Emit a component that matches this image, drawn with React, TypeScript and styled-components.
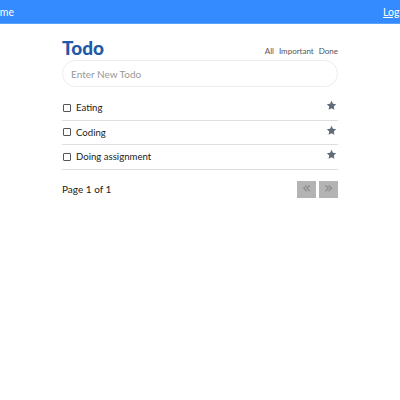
import React from "react";
import styled, { createGlobalStyle } from "styled-components";

const Global = createGlobalStyle`
  html, body { margin: 0; padding: 0; background: #fff; }
  body { font-family: Lato, "Open Sans", sans-serif; color: #222; }
  * { box-sizing: border-box; }
`;

const NavBar = styled.nav`
  height: 24px;
  background: #338bff;
  border-bottom: 1px solid #5aa2ff;
  display: flex;
  align-items: center;
  justify-content: space-between;
  overflow: hidden;
`;

const NavLink = styled.a<{ $edge: "left" | "right"; $underline?: boolean }>`
  color: #fff;
  font-size: 10.5px;
  text-decoration: ${(p) => (p.$underline ? "underline" : "none")};
  margin-left: ${(p) => (p.$edge === "left" ? "-14px" : "0")};
  margin-right: ${(p) => (p.$edge === "right" ? "-15px" : "0")};
  white-space: nowrap;
`;

const Main = styled.main`
  width: 276px;
  margin: 0 auto;
  padding-top: 12px;
`;

const Header = styled.div`
  display: flex;
  align-items: flex-end;
  justify-content: space-between;
  height: 24px;
`;

const Title = styled.h1`
  margin: 0;
  font-size: 19px;
  font-weight: 900;
  color: #1e5aa8;
  line-height: 24px;
`;

const Filters = styled.div`
  display: flex;
  gap: 5px;
  padding-bottom: 4px;
`;

const Filter = styled.span`
  font-size: 8px;
  color: #555;
`;

const Input = styled.input`
  width: 100%;
  height: 27px;
  border: 1px solid #ececec;
  border-radius: 14px;
  padding: 0 8px;
  font-family: inherit;
  font-size: 10px;
  outline: none;
  &::placeholder { color: #999; }
`;

const List = styled.ul`
  list-style: none;
  margin: 9px 0 0;
  padding: 0;
`;

const Row = styled.li`
  height: 24.5px;
  border-bottom: 1px solid #dfdfdf;
  display: flex;
  align-items: center;
  justify-content: space-between;
  padding: 0 1px;
`;

const Left = styled.label`
  display: flex;
  align-items: center;
  gap: 5px;
  font-size: 9.6px;
  color: #222;
`;

const Box = styled.span`
  width: 8px;
  height: 8px;
  border: 1px solid #555;
  border-radius: 1px;
  display: inline-block;
`;

const StarIcon = styled.svg`
  width: 11px;
  height: 11px;
  margin-top: -4px;
`;

const Pager = styled.div`
  display: flex;
  align-items: center;
  justify-content: space-between;
  margin-top: 11px;
`;

const PageText = styled.span`
  font-size: 10px;
  color: #222;
`;

const Buttons = styled.div`
  display: flex;
  gap: 3px;
`;

const PageBtn = styled.button`
  width: 19px;
  height: 17px;
  border: none;
  background: #b3b3b3;
  color: #888;
  font-size: 15px;
  line-height: 1;
  padding: 0 0 2px;
  display: flex;
  align-items: center;
  justify-content: center;
  font-family: "DejaVu Sans", sans-serif;
`;

const Star = () => (
  <StarIcon viewBox="0 0 24 24">
    <path
      fill="#5f6b7a"
      d="M12 1.8l3.1 6.5 7.1.9-5.2 4.9 1.3 7.1L12 17.8l-6.3 3.4 1.3-7.1-5.2-4.9 7.1-.9z"
    />
  </StarIcon>
);

const todos = ["Eating", "Coding", "Doing assignment"];

export default function App() {
  return (
    <>
      <Global />
      <NavBar>
        <NavLink $edge="left">Home</NavLink>
        <NavLink $edge="right" $underline>Logout</NavLink>
      </NavBar>
      <Main>
        <Header>
          <Title>Todo</Title>
          <Filters>
            <Filter>All</Filter>
            <Filter>Important</Filter>
            <Filter>Done</Filter>
          </Filters>
        </Header>
        <Input placeholder="Enter New Todo" />
        <List>
          {todos.map((t) => (
            <Row key={t}>
              <Left>
                <Box />
                {t}
              </Left>
              <Star />
            </Row>
          ))}
        </List>
        <Pager>
          <PageText>Page 1 of 1</PageText>
          <Buttons>
            <PageBtn>«</PageBtn>
            <PageBtn>»</PageBtn>
          </Buttons>
        </Pager>
      </Main>
    </>
  );
}
